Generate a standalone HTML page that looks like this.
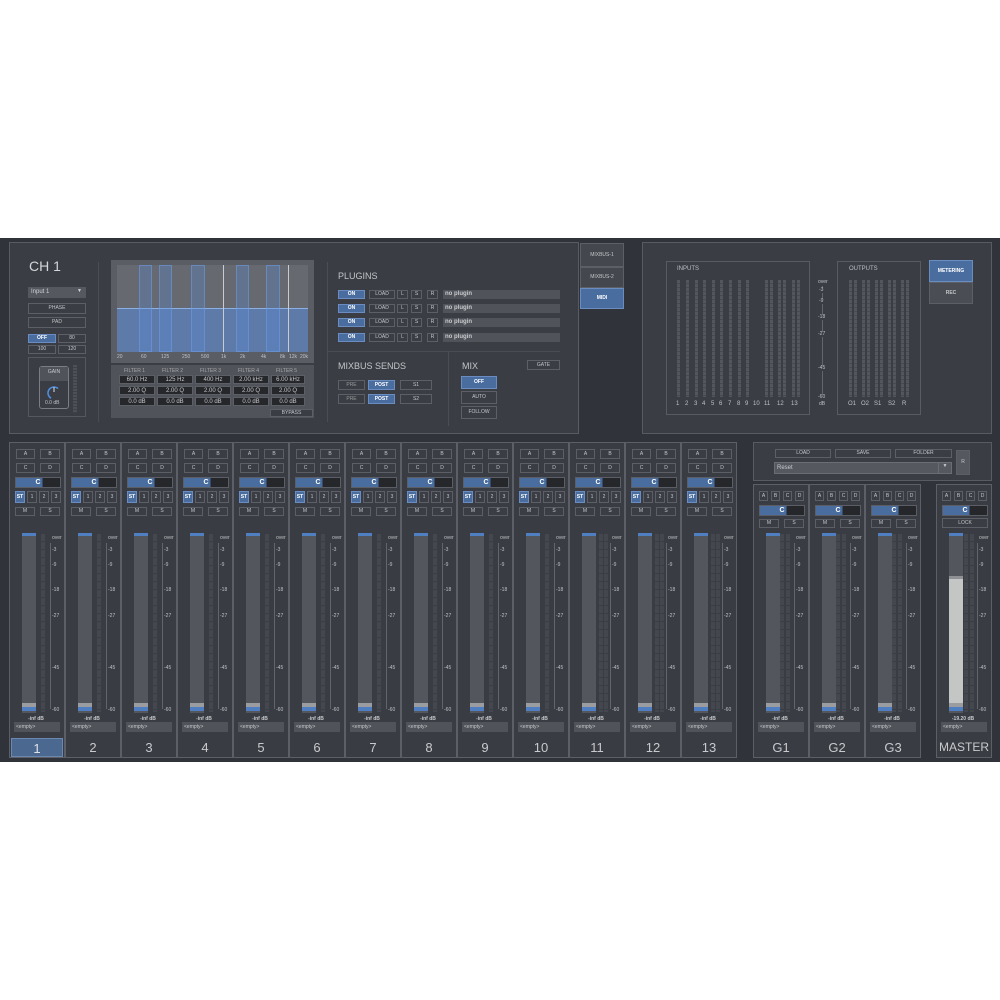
<!DOCTYPE html>
<html><head><meta charset="utf-8"><style>
*{box-sizing:border-box;margin:0;padding:0}
body{width:1000px;height:1000px;background:#fff;position:relative;overflow:hidden;font-family:"Liberation Sans",sans-serif;color:#c8cacd}
.a{position:absolute}
#band{left:0;top:238px;width:1000px;height:524px;background:#30333a}
.pn{position:absolute;background:#3a3d44;border:1px solid #585b61}
.b{position:absolute;background:#3a3d44;border:1px solid #5c5f65;font-size:5px;line-height:1;display:flex;align-items:center;justify-content:center;color:#c4c6c9}
.bl{background:#4a6da0;border-color:#6b8cc0;color:#fff;font-weight:bold}
.t{position:absolute;font-size:5px;color:#bfc1c4;white-space:nowrap;line-height:1}
.st{position:absolute;top:442px;width:56px;height:316px;border:1px solid #5c5f65;background:#393c43}
.gs{position:absolute;top:484px;width:56px;height:274px;border:1px solid #5c5f65;background:#393c43}
.pan{position:absolute;height:11px;border:1px solid #5b5e64;background:linear-gradient(90deg,#4a6da0 0,#4a6da0 60%,#26272b 60%);font-size:7px;color:#fff;font-weight:bold;text-align:center;line-height:9px}
.fm{position:absolute;left:0;width:56px;height:205px}
.tr{position:absolute;left:12px;top:2px;width:14px;height:180px;background:#53565d}
.tr:before{content:"";position:absolute;left:0;top:0;width:14px;height:3px;background:#4f7fc0}
.tr:after{content:"";position:absolute;left:0;bottom:2px;width:14px;height:8px;background:linear-gradient(#9a9c9f 0,#9a9c9f 50%,#4f7fc0 50%)}
.mt{position:absolute;top:3px;width:4px;height:178px;background:repeating-linear-gradient(#44474e 0,#44474e 7px,#3a3d44 7px,#3a3d44 8px)}
.sl{position:absolute;left:40px;top:12px;width:1px;height:166px;background:#62656b}
.lab{position:absolute;font-size:5px;color:#bfc1c4;left:42px;background:#393c43}
.inf{position:absolute;top:185px;left:0;width:52px;text-align:center;font-size:5px;font-weight:bold;color:#c8cacd}
.em{position:absolute;top:191px;left:4px;width:46px;height:10px;background:#50535a;font-size:5px;color:#c8cacd;padding:2px 2px}
.num{position:absolute;left:1px;width:52px;height:19px;font-size:13px;text-align:center;line-height:19px;color:#c8cacd}
.vm{position:absolute;top:280px;width:3px;height:117px;background:repeating-linear-gradient(#53565d 0,#53565d 3px,#474a51 3px,#474a51 4px)}
</style></head><body>
<div id="band" class="a"></div>

<div class="pn" style="left:9px;top:242px;width:570px;height:192px"></div>
<div class="a" style="left:29px;top:258px;font-size:14px;color:#d4d6d9">CH 1</div>
<div class="a" style="left:98px;top:262px;width:1px;height:160px;background:#4a4d53"></div>
<div class="a" style="left:327px;top:262px;width:1px;height:160px;background:#4a4d53"></div>
<div class="a" style="left:28px;top:287px;width:58px;height:11px;background:#55585f;font-size:6px;padding:2px 3px;color:#d0d2d5">Input 1<span style="position:absolute;right:4px;top:1px;font-size:5px">▼</span></div>
<div class="b" style="left:28px;top:303px;width:58px;height:11px">PHASE</div>
<div class="b" style="left:28px;top:317px;width:58px;height:11px">PAD</div>
<div class="b bl" style="left:28px;top:334px;width:28px;height:9px">OFF</div>
<div class="b" style="left:58px;top:334px;width:28px;height:9px">80</div>
<div class="b" style="left:28px;top:345px;width:28px;height:9px">100</div>
<div class="b" style="left:58px;top:345px;width:28px;height:9px">120</div>
<div class="a" style="left:28px;top:357px;width:58px;height:60px;border:1px solid #55585e"></div>
<div class="a" style="left:39px;top:366px;width:30px;height:43px;border:1px solid #7a7d83;border-radius:3px;background:#3a3d44"></div>
<div class="a" style="left:40px;top:367px;width:28px;height:14px;background:#50535a;font-size:5px;text-align:center;padding-top:2px">GAIN</div>
<svg class="a" style="left:45px;top:384px" width="18" height="18"><circle cx="9" cy="9" r="6" fill="none" stroke="#4f8fe0" stroke-width="1.5" stroke-dasharray="20 40" transform="rotate(120 9 9)"/><line x1="9" y1="3" x2="9" y2="8" stroke="#ddd" stroke-width="1"/></svg>
<div class="t" style="left:45px;top:401px">0.0 dB</div>
<div class="a" style="left:73px;top:365px;width:4px;height:48px;background:repeating-linear-gradient(#4d5057 0,#4d5057 2px,#3e4148 2px,#3e4148 3px)"></div>

<div class="a" style="left:111px;top:260px;width:203px;height:103px;background:#5a5d64"></div>
<div class="a" style="left:117px;top:265px;width:191px;height:87px;background:#666970"></div>
<div class="a" style="left:117px;top:308px;width:191px;height:44px;background:#5d7aa8;border-top:1px solid #8bb0e6"></div>
<div class="a" style="left:139px;top:265px;width:13px;height:87px;background:rgba(90,140,220,.3);border:1px solid rgba(110,160,230,.5)"></div>
<div class="a" style="left:159px;top:265px;width:13px;height:87px;background:rgba(90,140,220,.3);border:1px solid rgba(110,160,230,.5)"></div>
<div class="a" style="left:191px;top:265px;width:14px;height:87px;background:rgba(90,140,220,.3);border:1px solid rgba(110,160,230,.5)"></div>
<div class="a" style="left:236px;top:265px;width:13px;height:87px;background:rgba(90,140,220,.3);border:1px solid rgba(110,160,230,.5)"></div>
<div class="a" style="left:266px;top:265px;width:14px;height:87px;background:rgba(90,140,220,.3);border:1px solid rgba(110,160,230,.5)"></div>
<div class="a" style="left:223px;top:265px;width:1px;height:87px;background:#c9cbce"></div>
<div class="a" style="left:288px;top:265px;width:1px;height:87px;background:#c9cbce"></div>
<div class="t" style="left:117px;top:355px">20</div>
<div class="t" style="left:141px;top:355px">60</div>
<div class="t" style="left:161px;top:355px">125</div>
<div class="t" style="left:182px;top:355px">250</div>
<div class="t" style="left:201px;top:355px">500</div>
<div class="t" style="left:221px;top:355px">1k</div>
<div class="t" style="left:240px;top:355px">2k</div>
<div class="t" style="left:261px;top:355px">4k</div>
<div class="t" style="left:280px;top:355px">8k</div>
<div class="t" style="left:289px;top:355px">12k</div>
<div class="t" style="left:300px;top:355px">20k</div>
<div class="a" style="left:111px;top:365px;width:203px;height:53px;background:#50535a"></div>
<div class="t" style="left:124px;top:369px;color:#a6a8ab">FILTER 1</div>
<div class="t" style="left:162px;top:369px;color:#a6a8ab">FILTER 2</div>
<div class="t" style="left:200px;top:369px;color:#a6a8ab">FILTER 3</div>
<div class="t" style="left:238px;top:369px;color:#a6a8ab">FILTER 4</div>
<div class="t" style="left:276px;top:369px;color:#a6a8ab">FILTER 5</div>
<div class="b" style="left:119px;top:375px;width:36px;height:9px;background:#26272b;font-size:6px">60.0 Hz</div>
<div class="b" style="left:157px;top:375px;width:36px;height:9px;background:#26272b;font-size:6px">125 Hz</div>
<div class="b" style="left:195px;top:375px;width:36px;height:9px;background:#26272b;font-size:6px">400 Hz</div>
<div class="b" style="left:233px;top:375px;width:36px;height:9px;background:#26272b;font-size:6px">2.00 kHz</div>
<div class="b" style="left:271px;top:375px;width:34px;height:9px;background:#26272b;font-size:6px">6.00 kHz</div>
<div class="b" style="left:119px;top:386px;width:36px;height:9px;background:#26272b;font-size:6px">2.00 Q</div>
<div class="b" style="left:157px;top:386px;width:36px;height:9px;background:#26272b;font-size:6px">2.00 Q</div>
<div class="b" style="left:195px;top:386px;width:36px;height:9px;background:#26272b;font-size:6px">2.00 Q</div>
<div class="b" style="left:233px;top:386px;width:36px;height:9px;background:#26272b;font-size:6px">2.00 Q</div>
<div class="b" style="left:271px;top:386px;width:34px;height:9px;background:#26272b;font-size:6px">2.00 Q</div>
<div class="b" style="left:119px;top:397px;width:36px;height:9px;background:#26272b;font-size:6px">0.0 dB</div>
<div class="b" style="left:157px;top:397px;width:36px;height:9px;background:#26272b;font-size:6px">0.0 dB</div>
<div class="b" style="left:195px;top:397px;width:36px;height:9px;background:#26272b;font-size:6px">0.0 dB</div>
<div class="b" style="left:233px;top:397px;width:36px;height:9px;background:#26272b;font-size:6px">0.0 dB</div>
<div class="b" style="left:271px;top:397px;width:34px;height:9px;background:#26272b;font-size:6px">0.0 dB</div>
<div class="b" style="left:270px;top:409px;width:43px;height:8px">BYPASS</div>

<div class="a" style="left:338px;top:271px;font-size:9px;color:#c3c5c8">PLUGINS</div>
<div class="b bl" style="left:338px;top:290px;width:27px;height:9px">ON</div><div class="b" style="left:369px;top:290px;width:26px;height:9px">LOAD</div><div class="b" style="left:397px;top:290px;width:11px;height:9px">L</div><div class="b" style="left:411px;top:290px;width:11px;height:9px">S</div><div class="b" style="left:427px;top:290px;width:11px;height:9px">R</div><div class="a" style="left:443px;top:290px;width:117px;height:9px;background:#50535a;font-size:6px;padding:1px 2px;font-weight:bold">no plugin</div>
<div class="b bl" style="left:338px;top:304px;width:27px;height:9px">ON</div><div class="b" style="left:369px;top:304px;width:26px;height:9px">LOAD</div><div class="b" style="left:397px;top:304px;width:11px;height:9px">L</div><div class="b" style="left:411px;top:304px;width:11px;height:9px">S</div><div class="b" style="left:427px;top:304px;width:11px;height:9px">R</div><div class="a" style="left:443px;top:304px;width:117px;height:9px;background:#50535a;font-size:6px;padding:1px 2px;font-weight:bold">no plugin</div>
<div class="b bl" style="left:338px;top:318px;width:27px;height:9px">ON</div><div class="b" style="left:369px;top:318px;width:26px;height:9px">LOAD</div><div class="b" style="left:397px;top:318px;width:11px;height:9px">L</div><div class="b" style="left:411px;top:318px;width:11px;height:9px">S</div><div class="b" style="left:427px;top:318px;width:11px;height:9px">R</div><div class="a" style="left:443px;top:318px;width:117px;height:9px;background:#50535a;font-size:6px;padding:1px 2px;font-weight:bold">no plugin</div>
<div class="b bl" style="left:338px;top:333px;width:27px;height:9px">ON</div><div class="b" style="left:369px;top:333px;width:26px;height:9px">LOAD</div><div class="b" style="left:397px;top:333px;width:11px;height:9px">L</div><div class="b" style="left:411px;top:333px;width:11px;height:9px">S</div><div class="b" style="left:427px;top:333px;width:11px;height:9px">R</div><div class="a" style="left:443px;top:333px;width:117px;height:9px;background:#50535a;font-size:6px;padding:1px 2px;font-weight:bold">no plugin</div>
<div class="a" style="left:327px;top:351px;width:233px;height:1px;background:#4a4d53"></div>
<div class="a" style="left:448px;top:352px;width:1px;height:74px;background:#4a4d53"></div>
<div class="a" style="left:338px;top:361px;font-size:9px;color:#c3c5c8">MIXBUS SENDS</div>
<div class="b" style="left:338px;top:380px;width:27px;height:10px;color:#999">PRE</div><div class="b bl" style="left:368px;top:380px;width:27px;height:10px">POST</div><div class="b" style="left:400px;top:380px;width:32px;height:10px">S1</div>
<div class="b" style="left:338px;top:394px;width:27px;height:10px;color:#999">PRE</div><div class="b bl" style="left:368px;top:394px;width:27px;height:10px">POST</div><div class="b" style="left:400px;top:394px;width:32px;height:10px">S2</div>
<div class="a" style="left:462px;top:361px;font-size:9px;color:#c3c5c8">MIX</div>
<div class="b" style="left:527px;top:360px;width:33px;height:10px">GATE</div>
<div class="b bl" style="left:461px;top:376px;width:36px;height:13px">OFF</div>
<div class="b" style="left:461px;top:391px;width:36px;height:13px">AUTO</div>
<div class="b" style="left:461px;top:406px;width:36px;height:13px">FOLLOW</div>
<div class="b" style="left:580px;top:243px;width:44px;height:24px;background:#44474d">MIXBUS-1</div>
<div class="b" style="left:580px;top:267px;width:44px;height:21px;background:#44474d">MIXBUS-2</div>
<div class="b bl" style="left:580px;top:288px;width:44px;height:21px">MIDI</div>

<div class="pn" style="left:642px;top:242px;width:350px;height:192px"></div>
<div class="a" style="left:666px;top:261px;width:144px;height:154px;border:1px solid #585b61"></div>
<div class="t" style="left:677px;top:266px;font-size:6px">INPUTS</div>
<div class="a" style="left:837px;top:261px;width:84px;height:154px;border:1px solid #585b61"></div>
<div class="t" style="left:849px;top:266px;font-size:6px">OUTPUTS</div>
<div class="vm" style="left:677px"></div><div class="vm" style="left:686px"></div><div class="vm" style="left:695px"></div><div class="vm" style="left:703px"></div><div class="vm" style="left:712px"></div><div class="vm" style="left:720px"></div><div class="vm" style="left:729px"></div><div class="vm" style="left:738px"></div><div class="vm" style="left:746px"></div><div class="vm" style="left:765px"></div><div class="vm" style="left:770px"></div><div class="vm" style="left:778px"></div><div class="vm" style="left:783px"></div><div class="vm" style="left:792px"></div><div class="vm" style="left:797px"></div>
<div class="vm" style="left:849px"></div><div class="vm" style="left:854px"></div><div class="vm" style="left:862px"></div><div class="vm" style="left:867px"></div><div class="vm" style="left:875px"></div><div class="vm" style="left:880px"></div><div class="vm" style="left:888px"></div><div class="vm" style="left:893px"></div><div class="vm" style="left:901px"></div><div class="vm" style="left:906px"></div>
<div class="t" style="left:676px;top:401px;font-size:6px">1</div><div class="t" style="left:685px;top:401px;font-size:6px">2</div><div class="t" style="left:694px;top:401px;font-size:6px">3</div><div class="t" style="left:702px;top:401px;font-size:6px">4</div><div class="t" style="left:711px;top:401px;font-size:6px">5</div><div class="t" style="left:719px;top:401px;font-size:6px">6</div><div class="t" style="left:728px;top:401px;font-size:6px">7</div><div class="t" style="left:737px;top:401px;font-size:6px">8</div><div class="t" style="left:745px;top:401px;font-size:6px">9</div><div class="t" style="left:753px;top:401px;font-size:6px">10</div><div class="t" style="left:764px;top:401px;font-size:6px">11</div><div class="t" style="left:777px;top:401px;font-size:6px">12</div><div class="t" style="left:791px;top:401px;font-size:6px">13</div>
<div class="t" style="left:848px;top:401px;font-size:6px">O1</div><div class="t" style="left:861px;top:401px;font-size:6px">O2</div><div class="t" style="left:874px;top:401px;font-size:6px">S1</div><div class="t" style="left:888px;top:401px;font-size:6px">S2</div><div class="t" style="left:902px;top:401px;font-size:6px">R</div>
<div class="a" style="left:822px;top:286px;width:1px;height:110px;background:#62656b"></div>
<div class="t" style="left:818px;top:280px;background:#3a3d44">over</div>
<div class="t" style="left:819px;top:288px;background:#3a3d44">-3</div>
<div class="t" style="left:819px;top:299px;background:#3a3d44">-9</div>
<div class="t" style="left:818px;top:315px;background:#3a3d44">-18</div>
<div class="t" style="left:818px;top:332px;background:#3a3d44">-27</div>
<div class="t" style="left:818px;top:366px;background:#3a3d44">-45</div>
<div class="t" style="left:818px;top:395px;background:#3a3d44">-60</div>
<div class="t" style="left:819px;top:402px">dB</div>
<div class="b bl" style="left:929px;top:260px;width:44px;height:22px">METERING</div>
<div class="b" style="left:929px;top:282px;width:44px;height:22px;background:#4a4d54;font-weight:bold">REC</div>

<div class="pn" style="left:753px;top:442px;width:239px;height:39px"></div>
<div class="b" style="left:775px;top:449px;width:56px;height:9px">LOAD</div>
<div class="b" style="left:835px;top:449px;width:56px;height:9px">SAVE</div>
<div class="b" style="left:895px;top:449px;width:57px;height:9px">FOLDER</div>
<div class="a" style="left:774px;top:462px;width:178px;height:12px;background:#55585f;border:1px solid #6a6d73;font-size:6px;padding:2px 2px">Reset<span style="position:absolute;right:0;top:0;width:13px;height:10px;border-left:1px solid #6a6d73;text-align:center;font-size:5px">▼</span></div>
<div class="b" style="left:956px;top:450px;width:14px;height:25px;background:#55585f">R</div>

<div class="st" style="left:9px"><div class="b" style="left:6px;top:6px;width:19px;height:10px">A</div><div class="b" style="left:30px;top:6px;width:20px;height:10px">B</div><div class="b" style="left:6px;top:20px;width:19px;height:10px">C</div><div class="b" style="left:30px;top:20px;width:20px;height:10px">D</div><div class="pan" style="left:5px;top:34px;width:46px">C</div><div class="b bl" style="left:5px;top:48px;width:10px;height:12px">ST</div><div class="b" style="left:17px;top:48px;width:10px;height:12px">1</div><div class="b" style="left:29px;top:48px;width:10px;height:12px">2</div><div class="b" style="left:41px;top:48px;width:10px;height:12px">3</div><div class="b" style="left:5px;top:64px;width:20px;height:9px">M</div><div class="b" style="left:30px;top:64px;width:20px;height:9px">S</div>
<div class="fm" style="top:88px"><div class="tr"></div><div class="mt" style="left:31px"></div><div class="sl"></div><div class="lab" style="top:4px">over</div><div class="lab" style="top:16px">-3</div><div class="lab" style="top:31px">-9</div><div class="lab" style="top:56px">-18</div><div class="lab" style="top:82px">-27</div><div class="lab" style="top:134px">-45</div><div class="lab" style="top:176px">-60</div><div class="inf">-inf dB</div><div class="em">&lt;empty&gt;</div></div>
<div class="num" style="top:295px;background:#4a6890;border:1px solid #6a88b0;color:#dfe3e8">1</div></div>
<div class="st" style="left:65px"><div class="b" style="left:6px;top:6px;width:19px;height:10px">A</div><div class="b" style="left:30px;top:6px;width:20px;height:10px">B</div><div class="b" style="left:6px;top:20px;width:19px;height:10px">C</div><div class="b" style="left:30px;top:20px;width:20px;height:10px">D</div><div class="pan" style="left:5px;top:34px;width:46px">C</div><div class="b bl" style="left:5px;top:48px;width:10px;height:12px">ST</div><div class="b" style="left:17px;top:48px;width:10px;height:12px">1</div><div class="b" style="left:29px;top:48px;width:10px;height:12px">2</div><div class="b" style="left:41px;top:48px;width:10px;height:12px">3</div><div class="b" style="left:5px;top:64px;width:20px;height:9px">M</div><div class="b" style="left:30px;top:64px;width:20px;height:9px">S</div>
<div class="fm" style="top:88px"><div class="tr"></div><div class="mt" style="left:31px"></div><div class="sl"></div><div class="lab" style="top:4px">over</div><div class="lab" style="top:16px">-3</div><div class="lab" style="top:31px">-9</div><div class="lab" style="top:56px">-18</div><div class="lab" style="top:82px">-27</div><div class="lab" style="top:134px">-45</div><div class="lab" style="top:176px">-60</div><div class="inf">-inf dB</div><div class="em">&lt;empty&gt;</div></div>
<div class="num" style="top:295px">2</div></div>
<div class="st" style="left:121px"><div class="b" style="left:6px;top:6px;width:19px;height:10px">A</div><div class="b" style="left:30px;top:6px;width:20px;height:10px">B</div><div class="b" style="left:6px;top:20px;width:19px;height:10px">C</div><div class="b" style="left:30px;top:20px;width:20px;height:10px">D</div><div class="pan" style="left:5px;top:34px;width:46px">C</div><div class="b bl" style="left:5px;top:48px;width:10px;height:12px">ST</div><div class="b" style="left:17px;top:48px;width:10px;height:12px">1</div><div class="b" style="left:29px;top:48px;width:10px;height:12px">2</div><div class="b" style="left:41px;top:48px;width:10px;height:12px">3</div><div class="b" style="left:5px;top:64px;width:20px;height:9px">M</div><div class="b" style="left:30px;top:64px;width:20px;height:9px">S</div>
<div class="fm" style="top:88px"><div class="tr"></div><div class="mt" style="left:31px"></div><div class="sl"></div><div class="lab" style="top:4px">over</div><div class="lab" style="top:16px">-3</div><div class="lab" style="top:31px">-9</div><div class="lab" style="top:56px">-18</div><div class="lab" style="top:82px">-27</div><div class="lab" style="top:134px">-45</div><div class="lab" style="top:176px">-60</div><div class="inf">-inf dB</div><div class="em">&lt;empty&gt;</div></div>
<div class="num" style="top:295px">3</div></div>
<div class="st" style="left:177px"><div class="b" style="left:6px;top:6px;width:19px;height:10px">A</div><div class="b" style="left:30px;top:6px;width:20px;height:10px">B</div><div class="b" style="left:6px;top:20px;width:19px;height:10px">C</div><div class="b" style="left:30px;top:20px;width:20px;height:10px">D</div><div class="pan" style="left:5px;top:34px;width:46px">C</div><div class="b bl" style="left:5px;top:48px;width:10px;height:12px">ST</div><div class="b" style="left:17px;top:48px;width:10px;height:12px">1</div><div class="b" style="left:29px;top:48px;width:10px;height:12px">2</div><div class="b" style="left:41px;top:48px;width:10px;height:12px">3</div><div class="b" style="left:5px;top:64px;width:20px;height:9px">M</div><div class="b" style="left:30px;top:64px;width:20px;height:9px">S</div>
<div class="fm" style="top:88px"><div class="tr"></div><div class="mt" style="left:31px"></div><div class="sl"></div><div class="lab" style="top:4px">over</div><div class="lab" style="top:16px">-3</div><div class="lab" style="top:31px">-9</div><div class="lab" style="top:56px">-18</div><div class="lab" style="top:82px">-27</div><div class="lab" style="top:134px">-45</div><div class="lab" style="top:176px">-60</div><div class="inf">-inf dB</div><div class="em">&lt;empty&gt;</div></div>
<div class="num" style="top:295px">4</div></div>
<div class="st" style="left:233px"><div class="b" style="left:6px;top:6px;width:19px;height:10px">A</div><div class="b" style="left:30px;top:6px;width:20px;height:10px">B</div><div class="b" style="left:6px;top:20px;width:19px;height:10px">C</div><div class="b" style="left:30px;top:20px;width:20px;height:10px">D</div><div class="pan" style="left:5px;top:34px;width:46px">C</div><div class="b bl" style="left:5px;top:48px;width:10px;height:12px">ST</div><div class="b" style="left:17px;top:48px;width:10px;height:12px">1</div><div class="b" style="left:29px;top:48px;width:10px;height:12px">2</div><div class="b" style="left:41px;top:48px;width:10px;height:12px">3</div><div class="b" style="left:5px;top:64px;width:20px;height:9px">M</div><div class="b" style="left:30px;top:64px;width:20px;height:9px">S</div>
<div class="fm" style="top:88px"><div class="tr"></div><div class="mt" style="left:31px"></div><div class="sl"></div><div class="lab" style="top:4px">over</div><div class="lab" style="top:16px">-3</div><div class="lab" style="top:31px">-9</div><div class="lab" style="top:56px">-18</div><div class="lab" style="top:82px">-27</div><div class="lab" style="top:134px">-45</div><div class="lab" style="top:176px">-60</div><div class="inf">-inf dB</div><div class="em">&lt;empty&gt;</div></div>
<div class="num" style="top:295px">5</div></div>
<div class="st" style="left:289px"><div class="b" style="left:6px;top:6px;width:19px;height:10px">A</div><div class="b" style="left:30px;top:6px;width:20px;height:10px">B</div><div class="b" style="left:6px;top:20px;width:19px;height:10px">C</div><div class="b" style="left:30px;top:20px;width:20px;height:10px">D</div><div class="pan" style="left:5px;top:34px;width:46px">C</div><div class="b bl" style="left:5px;top:48px;width:10px;height:12px">ST</div><div class="b" style="left:17px;top:48px;width:10px;height:12px">1</div><div class="b" style="left:29px;top:48px;width:10px;height:12px">2</div><div class="b" style="left:41px;top:48px;width:10px;height:12px">3</div><div class="b" style="left:5px;top:64px;width:20px;height:9px">M</div><div class="b" style="left:30px;top:64px;width:20px;height:9px">S</div>
<div class="fm" style="top:88px"><div class="tr"></div><div class="mt" style="left:31px"></div><div class="sl"></div><div class="lab" style="top:4px">over</div><div class="lab" style="top:16px">-3</div><div class="lab" style="top:31px">-9</div><div class="lab" style="top:56px">-18</div><div class="lab" style="top:82px">-27</div><div class="lab" style="top:134px">-45</div><div class="lab" style="top:176px">-60</div><div class="inf">-inf dB</div><div class="em">&lt;empty&gt;</div></div>
<div class="num" style="top:295px">6</div></div>
<div class="st" style="left:345px"><div class="b" style="left:6px;top:6px;width:19px;height:10px">A</div><div class="b" style="left:30px;top:6px;width:20px;height:10px">B</div><div class="b" style="left:6px;top:20px;width:19px;height:10px">C</div><div class="b" style="left:30px;top:20px;width:20px;height:10px">D</div><div class="pan" style="left:5px;top:34px;width:46px">C</div><div class="b bl" style="left:5px;top:48px;width:10px;height:12px">ST</div><div class="b" style="left:17px;top:48px;width:10px;height:12px">1</div><div class="b" style="left:29px;top:48px;width:10px;height:12px">2</div><div class="b" style="left:41px;top:48px;width:10px;height:12px">3</div><div class="b" style="left:5px;top:64px;width:20px;height:9px">M</div><div class="b" style="left:30px;top:64px;width:20px;height:9px">S</div>
<div class="fm" style="top:88px"><div class="tr"></div><div class="mt" style="left:31px"></div><div class="sl"></div><div class="lab" style="top:4px">over</div><div class="lab" style="top:16px">-3</div><div class="lab" style="top:31px">-9</div><div class="lab" style="top:56px">-18</div><div class="lab" style="top:82px">-27</div><div class="lab" style="top:134px">-45</div><div class="lab" style="top:176px">-60</div><div class="inf">-inf dB</div><div class="em">&lt;empty&gt;</div></div>
<div class="num" style="top:295px">7</div></div>
<div class="st" style="left:401px"><div class="b" style="left:6px;top:6px;width:19px;height:10px">A</div><div class="b" style="left:30px;top:6px;width:20px;height:10px">B</div><div class="b" style="left:6px;top:20px;width:19px;height:10px">C</div><div class="b" style="left:30px;top:20px;width:20px;height:10px">D</div><div class="pan" style="left:5px;top:34px;width:46px">C</div><div class="b bl" style="left:5px;top:48px;width:10px;height:12px">ST</div><div class="b" style="left:17px;top:48px;width:10px;height:12px">1</div><div class="b" style="left:29px;top:48px;width:10px;height:12px">2</div><div class="b" style="left:41px;top:48px;width:10px;height:12px">3</div><div class="b" style="left:5px;top:64px;width:20px;height:9px">M</div><div class="b" style="left:30px;top:64px;width:20px;height:9px">S</div>
<div class="fm" style="top:88px"><div class="tr"></div><div class="mt" style="left:31px"></div><div class="sl"></div><div class="lab" style="top:4px">over</div><div class="lab" style="top:16px">-3</div><div class="lab" style="top:31px">-9</div><div class="lab" style="top:56px">-18</div><div class="lab" style="top:82px">-27</div><div class="lab" style="top:134px">-45</div><div class="lab" style="top:176px">-60</div><div class="inf">-inf dB</div><div class="em">&lt;empty&gt;</div></div>
<div class="num" style="top:295px">8</div></div>
<div class="st" style="left:457px"><div class="b" style="left:6px;top:6px;width:19px;height:10px">A</div><div class="b" style="left:30px;top:6px;width:20px;height:10px">B</div><div class="b" style="left:6px;top:20px;width:19px;height:10px">C</div><div class="b" style="left:30px;top:20px;width:20px;height:10px">D</div><div class="pan" style="left:5px;top:34px;width:46px">C</div><div class="b bl" style="left:5px;top:48px;width:10px;height:12px">ST</div><div class="b" style="left:17px;top:48px;width:10px;height:12px">1</div><div class="b" style="left:29px;top:48px;width:10px;height:12px">2</div><div class="b" style="left:41px;top:48px;width:10px;height:12px">3</div><div class="b" style="left:5px;top:64px;width:20px;height:9px">M</div><div class="b" style="left:30px;top:64px;width:20px;height:9px">S</div>
<div class="fm" style="top:88px"><div class="tr"></div><div class="mt" style="left:31px"></div><div class="sl"></div><div class="lab" style="top:4px">over</div><div class="lab" style="top:16px">-3</div><div class="lab" style="top:31px">-9</div><div class="lab" style="top:56px">-18</div><div class="lab" style="top:82px">-27</div><div class="lab" style="top:134px">-45</div><div class="lab" style="top:176px">-60</div><div class="inf">-inf dB</div><div class="em">&lt;empty&gt;</div></div>
<div class="num" style="top:295px">9</div></div>
<div class="st" style="left:513px"><div class="b" style="left:6px;top:6px;width:19px;height:10px">A</div><div class="b" style="left:30px;top:6px;width:20px;height:10px">B</div><div class="b" style="left:6px;top:20px;width:19px;height:10px">C</div><div class="b" style="left:30px;top:20px;width:20px;height:10px">D</div><div class="pan" style="left:5px;top:34px;width:46px">C</div><div class="b bl" style="left:5px;top:48px;width:10px;height:12px">ST</div><div class="b" style="left:17px;top:48px;width:10px;height:12px">1</div><div class="b" style="left:29px;top:48px;width:10px;height:12px">2</div><div class="b" style="left:41px;top:48px;width:10px;height:12px">3</div><div class="b" style="left:5px;top:64px;width:20px;height:9px">M</div><div class="b" style="left:30px;top:64px;width:20px;height:9px">S</div>
<div class="fm" style="top:88px"><div class="tr"></div><div class="mt" style="left:31px"></div><div class="sl"></div><div class="lab" style="top:4px">over</div><div class="lab" style="top:16px">-3</div><div class="lab" style="top:31px">-9</div><div class="lab" style="top:56px">-18</div><div class="lab" style="top:82px">-27</div><div class="lab" style="top:134px">-45</div><div class="lab" style="top:176px">-60</div><div class="inf">-inf dB</div><div class="em">&lt;empty&gt;</div></div>
<div class="num" style="top:295px">10</div></div>
<div class="st" style="left:569px"><div class="b" style="left:6px;top:6px;width:19px;height:10px">A</div><div class="b" style="left:30px;top:6px;width:20px;height:10px">B</div><div class="b" style="left:6px;top:20px;width:19px;height:10px">C</div><div class="b" style="left:30px;top:20px;width:20px;height:10px">D</div><div class="pan" style="left:5px;top:34px;width:46px">C</div><div class="b bl" style="left:5px;top:48px;width:10px;height:12px">ST</div><div class="b" style="left:17px;top:48px;width:10px;height:12px">1</div><div class="b" style="left:29px;top:48px;width:10px;height:12px">2</div><div class="b" style="left:41px;top:48px;width:10px;height:12px">3</div><div class="b" style="left:5px;top:64px;width:20px;height:9px">M</div><div class="b" style="left:30px;top:64px;width:20px;height:9px">S</div>
<div class="fm" style="top:88px"><div class="tr"></div><div class="mt" style="left:29px"></div><div class="mt" style="left:34px"></div><div class="sl"></div><div class="lab" style="top:4px">over</div><div class="lab" style="top:16px">-3</div><div class="lab" style="top:31px">-9</div><div class="lab" style="top:56px">-18</div><div class="lab" style="top:82px">-27</div><div class="lab" style="top:134px">-45</div><div class="lab" style="top:176px">-60</div><div class="inf">-inf dB</div><div class="em">&lt;empty&gt;</div></div>
<div class="num" style="top:295px">11</div></div>
<div class="st" style="left:625px"><div class="b" style="left:6px;top:6px;width:19px;height:10px">A</div><div class="b" style="left:30px;top:6px;width:20px;height:10px">B</div><div class="b" style="left:6px;top:20px;width:19px;height:10px">C</div><div class="b" style="left:30px;top:20px;width:20px;height:10px">D</div><div class="pan" style="left:5px;top:34px;width:46px">C</div><div class="b bl" style="left:5px;top:48px;width:10px;height:12px">ST</div><div class="b" style="left:17px;top:48px;width:10px;height:12px">1</div><div class="b" style="left:29px;top:48px;width:10px;height:12px">2</div><div class="b" style="left:41px;top:48px;width:10px;height:12px">3</div><div class="b" style="left:5px;top:64px;width:20px;height:9px">M</div><div class="b" style="left:30px;top:64px;width:20px;height:9px">S</div>
<div class="fm" style="top:88px"><div class="tr"></div><div class="mt" style="left:29px"></div><div class="mt" style="left:34px"></div><div class="sl"></div><div class="lab" style="top:4px">over</div><div class="lab" style="top:16px">-3</div><div class="lab" style="top:31px">-9</div><div class="lab" style="top:56px">-18</div><div class="lab" style="top:82px">-27</div><div class="lab" style="top:134px">-45</div><div class="lab" style="top:176px">-60</div><div class="inf">-inf dB</div><div class="em">&lt;empty&gt;</div></div>
<div class="num" style="top:295px">12</div></div>
<div class="st" style="left:681px"><div class="b" style="left:6px;top:6px;width:19px;height:10px">A</div><div class="b" style="left:30px;top:6px;width:20px;height:10px">B</div><div class="b" style="left:6px;top:20px;width:19px;height:10px">C</div><div class="b" style="left:30px;top:20px;width:20px;height:10px">D</div><div class="pan" style="left:5px;top:34px;width:46px">C</div><div class="b bl" style="left:5px;top:48px;width:10px;height:12px">ST</div><div class="b" style="left:17px;top:48px;width:10px;height:12px">1</div><div class="b" style="left:29px;top:48px;width:10px;height:12px">2</div><div class="b" style="left:41px;top:48px;width:10px;height:12px">3</div><div class="b" style="left:5px;top:64px;width:20px;height:9px">M</div><div class="b" style="left:30px;top:64px;width:20px;height:9px">S</div>
<div class="fm" style="top:88px"><div class="tr"></div><div class="mt" style="left:29px"></div><div class="mt" style="left:34px"></div><div class="sl"></div><div class="lab" style="top:4px">over</div><div class="lab" style="top:16px">-3</div><div class="lab" style="top:31px">-9</div><div class="lab" style="top:56px">-18</div><div class="lab" style="top:82px">-27</div><div class="lab" style="top:134px">-45</div><div class="lab" style="top:176px">-60</div><div class="inf">-inf dB</div><div class="em">&lt;empty&gt;</div></div>
<div class="num" style="top:295px">13</div></div>

<div class="gs" style="left:753px"><div class="b" style="left:5px;top:6px;width:9px;height:10px">A</div><div class="b" style="left:17px;top:6px;width:9px;height:10px">B</div><div class="b" style="left:29px;top:6px;width:9px;height:10px">C</div><div class="b" style="left:41px;top:6px;width:9px;height:10px">D</div><div class="pan" style="left:5px;top:20px;width:46px">C</div><div class="b" style="left:5px;top:34px;width:20px;height:9px">M</div><div class="b" style="left:30px;top:34px;width:20px;height:9px">S</div>
<div class="fm" style="top:46px"><div class="tr"></div><div class="mt" style="left:26px"></div><div class="mt" style="left:32px"></div><div class="sl"></div><div class="lab" style="top:4px">over</div><div class="lab" style="top:16px">-3</div><div class="lab" style="top:31px">-9</div><div class="lab" style="top:56px">-18</div><div class="lab" style="top:82px">-27</div><div class="lab" style="top:134px">-45</div><div class="lab" style="top:176px">-60</div><div class="inf">-inf dB</div><div class="em">&lt;empty&gt;</div></div>
<div class="num" style="top:253px">G1</div></div>
<div class="gs" style="left:809px"><div class="b" style="left:5px;top:6px;width:9px;height:10px">A</div><div class="b" style="left:17px;top:6px;width:9px;height:10px">B</div><div class="b" style="left:29px;top:6px;width:9px;height:10px">C</div><div class="b" style="left:41px;top:6px;width:9px;height:10px">D</div><div class="pan" style="left:5px;top:20px;width:46px">C</div><div class="b" style="left:5px;top:34px;width:20px;height:9px">M</div><div class="b" style="left:30px;top:34px;width:20px;height:9px">S</div>
<div class="fm" style="top:46px"><div class="tr"></div><div class="mt" style="left:26px"></div><div class="mt" style="left:32px"></div><div class="sl"></div><div class="lab" style="top:4px">over</div><div class="lab" style="top:16px">-3</div><div class="lab" style="top:31px">-9</div><div class="lab" style="top:56px">-18</div><div class="lab" style="top:82px">-27</div><div class="lab" style="top:134px">-45</div><div class="lab" style="top:176px">-60</div><div class="inf">-inf dB</div><div class="em">&lt;empty&gt;</div></div>
<div class="num" style="top:253px">G2</div></div>
<div class="gs" style="left:865px"><div class="b" style="left:5px;top:6px;width:9px;height:10px">A</div><div class="b" style="left:17px;top:6px;width:9px;height:10px">B</div><div class="b" style="left:29px;top:6px;width:9px;height:10px">C</div><div class="b" style="left:41px;top:6px;width:9px;height:10px">D</div><div class="pan" style="left:5px;top:20px;width:46px">C</div><div class="b" style="left:5px;top:34px;width:20px;height:9px">M</div><div class="b" style="left:30px;top:34px;width:20px;height:9px">S</div>
<div class="fm" style="top:46px"><div class="tr"></div><div class="mt" style="left:26px"></div><div class="mt" style="left:32px"></div><div class="sl"></div><div class="lab" style="top:4px">over</div><div class="lab" style="top:16px">-3</div><div class="lab" style="top:31px">-9</div><div class="lab" style="top:56px">-18</div><div class="lab" style="top:82px">-27</div><div class="lab" style="top:134px">-45</div><div class="lab" style="top:176px">-60</div><div class="inf">-inf dB</div><div class="em">&lt;empty&gt;</div></div>
<div class="num" style="top:253px">G3</div></div>
<div class="gs" style="left:936px"><div class="b" style="left:5px;top:6px;width:9px;height:10px">A</div><div class="b" style="left:17px;top:6px;width:9px;height:10px">B</div><div class="b" style="left:29px;top:6px;width:9px;height:10px">C</div><div class="b" style="left:41px;top:6px;width:9px;height:10px">D</div><div class="pan" style="left:5px;top:20px;width:46px">C</div><div class="b" style="left:5px;top:33px;width:46px;height:10px">LOCK</div>
<div class="fm" style="top:46px"><div class="tr"><div style="position:absolute;left:0;top:43px;width:14px;height:127px;background:#c4c6c5;border-top:3px solid #8e9093"></div></div><div class="mt" style="left:27px"></div><div class="mt" style="left:33px"></div><div class="sl"></div><div class="lab" style="top:4px">over</div><div class="lab" style="top:16px">-3</div><div class="lab" style="top:31px">-9</div><div class="lab" style="top:56px">-18</div><div class="lab" style="top:82px">-27</div><div class="lab" style="top:134px">-45</div><div class="lab" style="top:176px">-60</div><div class="inf">-19.20 dB</div><div class="em">&lt;empty&gt;</div></div>
<div class="num" style="top:253px;font-size:12px">MASTER</div></div>
</body></html>
